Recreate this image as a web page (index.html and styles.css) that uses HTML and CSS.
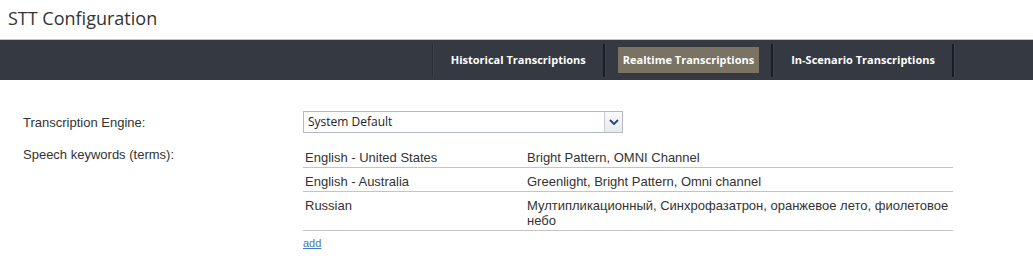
FILE: index.html
```html
<!DOCTYPE html>
<html>
<head>
<meta charset="utf-8">
<link rel="stylesheet" href="styles.css">
</head>
<body>
<div class="title">STT Configuration</div>
<div class="navbar">
  <span class="sep thin"></span>
  <span class="tab">Historical Transcriptions</span>
  <span class="sep"></span>
  <span class="tab active">Realtime Transcriptions</span>
  <span class="sep"></span>
  <span class="tab">In-Scenario Transcriptions</span>
  <span class="sep"></span>
</div>
<div class="form">
  <div class="label engine-label">Transcription Engine:</div>
  <div class="select">
    <span class="select-text">System Default</span>
    <span class="select-btn">
      <svg width="10" height="6" viewBox="0 0 10 6"><path d="M1 1 L5 5 L9 1" fill="none" stroke="#2c4a80" stroke-width="2"/></svg>
    </span>
  </div>
  <div class="label kw-label">Speech keywords (terms):</div>
  <div class="kw">
    <table class="terms">
      <tr><td class="lang">English - United States</td><td class="words">Bright Pattern, OMNI Channel</td></tr>
      <tr><td class="lang">English - Australia</td><td class="words">Greenlight, Bright Pattern, Omni channel</td></tr>
      <tr><td class="lang">Russian</td><td class="words">Мултипликационный, Синхрофазатрон, оранжевое лето, фиолетовое небо</td></tr>
    </table>
    <a class="add" href="#">add</a>
  </div>
</div>
</body>
</html>
```
FILE: styles.css
```css
html, body {
  margin: 0;
  padding: 0;
  background: #ffffff;
}
body {
  font-family: "Liberation Sans", Arial, sans-serif;
  color: #333333;
}
.title {
  height: 39px;
  box-sizing: border-box;
  padding: 6px 0 0 8px;
  font-family: "Open Sans", sans-serif;
  font-size: 18px;
  line-height: 24px;
  color: #333333;
}
.navbar {
  height: 41px;
  box-sizing: border-box;
  border-top: 1px solid #c2c4c8;
  background: #353941;
  display: flex;
  justify-content: flex-end;
  align-items: center;
  padding-right: 78px;
}
.sep {
  width: 2px;
  height: 33px;
  background: #1b1d22;
  border-right: 1px solid #3e424a;
}
.sep.thin {
  width: 1px;
  background: #2a2d33;
}
.tab {
  margin: 0 12px;
  padding: 0 5px;
  height: 26px;
  line-height: 26px;
  font-family: "Open Sans", sans-serif;
  font-weight: bold;
  font-size: 11px;
  color: #ffffff;
  white-space: nowrap;
}
.tab.active {
  background: #7a7262;
}
.form {
  display: grid;
  grid-template-columns: 280px 650px;
  padding: 31px 0 0 23px;
  row-gap: 11px;
}
.label {
  font-size: 13px;
  line-height: 15px;
  color: #333333;
}
.engine-label {
  align-self: center;
}
.kw-label {
  padding-top: 3px;
}
.select {
  width: 320px;
  height: 22px;
  box-sizing: border-box;
  border: 1px solid #b5b9c4;
  display: flex;
  align-items: stretch;
  background: #ffffff;
}
.select-text {
  flex: 1;
  font-family: "Open Sans", sans-serif;
  font-size: 12px;
  line-height: 20px;
  padding-left: 4px;
  color: #222222;
}
.select-btn {
  width: 17px;
  border-left: 1px solid #c9ccd4;
  background: linear-gradient(#fafafa, #e9eaee);
  display: flex;
  align-items: center;
  justify-content: center;
}
.terms {
  width: 650px;
  border-collapse: collapse;
}
.terms td {
  font-size: 13px;
  line-height: 15px;
  color: #333333;
  padding: 6px 0 2px 0;
  border-bottom: 1px solid #c4c4c4;
  vertical-align: top;
}
.terms td.lang {
  width: 222px;
  padding-left: 2px;
}
.terms td.words {
  padding-right: 4px;
}
.add {
  display: inline-block;
  margin-top: 6px;
  font-size: 11px;
  line-height: 13px;
  color: #4a78b0;
  text-decoration: underline;
}
```
